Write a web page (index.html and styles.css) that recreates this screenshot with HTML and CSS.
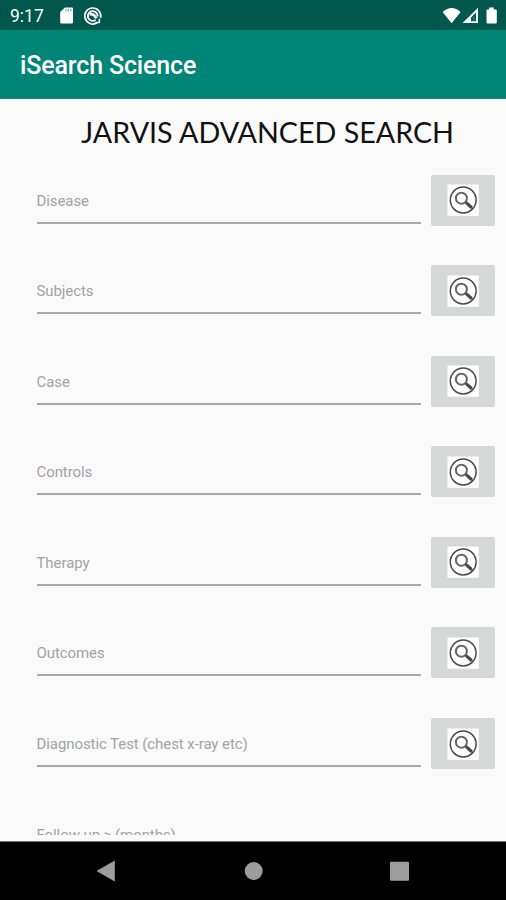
FILE: index.html
```
<!DOCTYPE html>
<html lang="en">
<head>
<meta charset="utf-8">
<title>iSearch Science</title>
<link rel="stylesheet" href="styles.css">
</head>
<body>
<svg class="defs" width="0" height="0">
  <symbol id="search" viewBox="0 0 32 32">
    <rect x=".5" y=".5" width="31.3" height="31.3" fill="#fff"/>
    <circle cx="16.2" cy="16" r="12.9" fill="none" stroke="#4a4a4a" stroke-width="1.5"/>
    <circle cx="14.4" cy="14.2" r="5.5" fill="none" stroke="#666" stroke-width="2"/>
    <path d="M18.3 18l2 1.8" stroke="#555" stroke-width="1.8"/>
    <path d="M20 19.4l4 3.6" stroke="#484848" stroke-width="3.2" stroke-linecap="round"/>
  </symbol>
</svg>
<header class="status">
  <span class="time">9:17</span>
  <svg class="sd" width="14" height="17" viewBox="0 0 14 17"><path d="M5 .5h7q1 0 1 1v14q0 1-1 1H1.200q-1 0-1-1V5z" fill="#fff"/><path d="M5.800 2.300v1.900M8.300 2.300v1.900M10.800 2.300v1.900" stroke="#00574b" stroke-width="1.200" opacity=".6"/></svg>
  <svg class="sync" width="20" height="20" viewBox="0 0 20 20" fill="none" stroke="#fff"><path d="M14 16.800A8 8 0 1 1 17.600 11.800" stroke-width="1.700"/><path d="M12.600 14A4.900 4.900 0 1 1 14.600 10.500" stroke-width="1.800"/><path d="M6.500 8.500q4-1.500 6.800 3.800" stroke-width="2.600"/><path d="M12.600 16.600h3.800v-3.800" stroke-width="1.500"/></svg>
  <svg class="signals" width="56" height="18" viewBox="0 0 56 18"><path d="M.6 5Q9.600-2.800 18.600 5L9.600 16.200z" fill="#fff"/><path d="M20.500 16L36 .8V16zM29 14.300h5V5.500L29 10.400z" fill="#fff" fill-rule="evenodd"/><path d="M31 10.500l1.600-1.600V14H31z" fill="#fff" opacity=".2"/><path d="M44.500 2.400h2.700V.6h4.600v1.800h2q1 0 1 1v12q0 1-1 1h-8.300q-1 0-1-1z" fill="#fff"/></svg>
</header>
<div class="appbar"><h1>iSearch Science</h1></div>
<main>
  <svg class="headline" width="506" height="75" viewBox="0 0 506 75"><text x="81" y="44" textLength="373" lengthAdjust="spacingAndGlyphs">JARVIS ADVANCED SEARCH</text></svg>
  <div class="row"><div class="field">Disease</div><button aria-label="Search"><svg width="32" height="32"><use href="#search"/></svg></button></div>
  <div class="row"><div class="field">Subjects</div><button aria-label="Search"><svg width="32" height="32"><use href="#search"/></svg></button></div>
  <div class="row"><div class="field">Case</div><button aria-label="Search"><svg width="32" height="32"><use href="#search"/></svg></button></div>
  <div class="row"><div class="field">Controls</div><button aria-label="Search"><svg width="32" height="32"><use href="#search"/></svg></button></div>
  <div class="row"><div class="field">Therapy</div><button aria-label="Search"><svg width="32" height="32"><use href="#search"/></svg></button></div>
  <div class="row"><div class="field">Outcomes</div><button aria-label="Search"><svg width="32" height="32"><use href="#search"/></svg></button></div>
  <div class="row"><div class="field">Diagnostic Test (chest x-ray etc)</div><button aria-label="Search"><svg width="32" height="32"><use href="#search"/></svg></button></div>
  <div class="last">Follow up &gt; (months)</div>
</main>
<nav>
  <svg width="506" height="58" viewBox="0 0 506 58" fill="#9d9d9d"><path d="M97 29L114.500 19v20z" stroke="#9d9d9d" stroke-width=".6"/><circle cx="253.700" cy="29" r="9"/><rect x="390" y="19.700" width="19" height="19" rx="1"/></svg>
</nav>
</body>
</html>
```
FILE: styles.css
```
* { box-sizing: border-box; }
body {
  margin: 0;
  width: 506px;
  height: 900px;
  overflow: hidden;
  display: flex;
  flex-direction: column;
  background: #fafafa;
  font-family: Roboto, "Liberation Sans", sans-serif;
}
svg { display: block; }
.defs { position: absolute; }
.status {
  height: 30px;
  flex: none;
  display: flex;
  align-items: center;
  padding: 1px 8px 0 10px;
  background: #00574b;
  color: #f4faf9;
}
.time { width: 50px; font-size: 17.5px; }
.sync { margin-left: 9px; }
.signals { margin-left: auto; }
.appbar {
  height: 69px;
  flex: none;
  display: flex;
  align-items: center;
  padding: 3px 20px 0;
  background: #008577;
  border-bottom: 1px solid #207d72;
}
h1 {
  margin: 0;
  color: #fff;
  font-size: 25px;
  font-weight: 500;
  line-height: 30px;
  letter-spacing: -0.15px;
}
main { height: 736px; flex: none; overflow: hidden; }
.headline text {
  font-family: Lato, "Open Sans", sans-serif;
  font-size: 29.7px;
  fill: #111;
}
.row {
  height: 90.6px;
  display: flex;
  align-items: flex-start;
  padding: 0.5px 11px 0 36.5px;
}
.field {
  width: 384.5px;
  height: 49px;
  margin-right: 10px;
  padding-top: 15px;
  border-bottom: 2px solid #a8a8a8;
}
.field, .last {
  color: #a3a3a3;
  font-size: 15px;
  line-height: 22px;
  letter-spacing: -0.08px;
}
.last { padding: 15.5px 36.5px; }
button {
  width: 64px;
  height: 51px;
  padding: 0;
  border: 0;
  border-radius: 2px;
  background: #d6d7d7;
  display: flex;
  align-items: center;
  justify-content: center;
}
nav {
  height: 59px;
  margin-top: auto;
  flex: none;
  background: #000;
  border-top: 1px solid #777;
}
```
